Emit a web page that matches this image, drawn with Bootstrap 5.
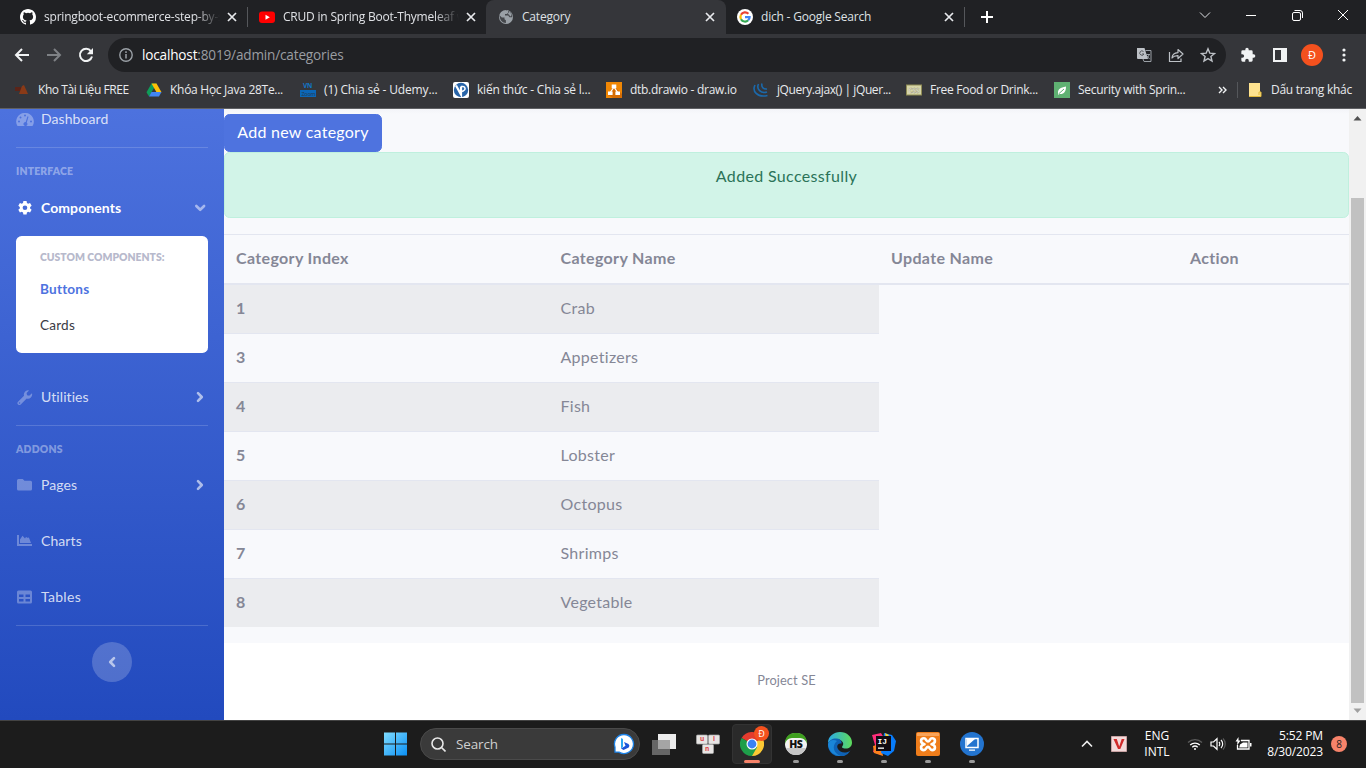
<!DOCTYPE html>
<html lang="en">
<head>
<meta charset="utf-8">
<meta name="viewport" content="width=device-width, initial-scale=1">
<title>Category</title>
<link href="https://cdn.jsdelivr.net/npm/bootstrap@5.3.0/dist/css/bootstrap.min.css" rel="stylesheet">
<style>
html,body{height:768px;overflow:hidden}
body{font-family:"Open Sans","Noto Sans",sans-serif;font-size:12px;line-height:16px;background:#202124;color:#e8eaed}
svg{display:block;flex:none}
.tabstrip{height:34px;padding-left:8px;background:#202124}
.tab{width:239px;height:34px;padding-left:12px;flex:none}
.tab .ttl{width:176px;margin-left:8px;overflow:hidden;white-space:nowrap;letter-spacing:-.2px;color:#dfe1e5}
.tab .fade-out{-webkit-mask-image:linear-gradient(90deg,#000 86%,transparent);mask-image:linear-gradient(90deg,#000 86%,transparent)}
.tab .cls{margin-left:4px}
.tab-on{background:#35363a;border-radius:8px 8px 0 0;width:240px;margin-right:-1px}
.tab-on .ttl{margin-left:8px}
.vsep{width:1px;height:20px;background:#55575b}
.winbtns{gap:34px;padding-right:17px;padding-bottom:5px}
.toolbar-row{height:38px;background:#35363a;padding-top:4px}
.nav-first{margin-left:14px}
.omni{height:34px;width:1118px;margin-left:14px;background:#202124;border-radius:17px;padding-left:11px;color:#9aa0a6}
.omni-icons{gap:16px;padding-right:10px}
.url{font-size:13.6px;letter-spacing:-.18px;margin-left:9px;color:#9a9da2}
.url b{font-weight:400;color:#fff}
.ext{margin-left:14px}
.ava{width:22px;height:22px;background:#f4511e;border-radius:50%;font-size:11px;color:#fff}
.marks{height:36px;background:#35363a;padding-left:14px;color:#e8eaed;letter-spacing:-.28px}
.bm{white-space:nowrap;flex:none}
.bm span{margin-left:8px}
.bm.tight span{letter-spacing:-.42px}
.viewport{height:612px;border-top:1px solid #5f6064;font-family:Lato,"Open Sans",sans-serif;font-variant-ligatures:none}
.side{width:224px;background:linear-gradient(180deg,#4d72de 0,#224abe 100%);font-size:14px;color:rgba(255,255,255,.8);overflow:hidden}
.side-row{height:56px;padding:0 16px;line-height:20px}
.side-row .lbl{margin-left:8px;letter-spacing:.08px}
.side-row.dash{height:38px;align-items:flex-start!important}
.side-row.on{color:#fff;font-weight:700}
.side hr{margin:0 16px;border:0;border-top:1px solid #fff;opacity:.16}
.side .hd{height:32px;padding:14px 16px 0;font-size:10.4px;font-weight:800;color:rgba(255,255,255,.4);line-height:18px;letter-spacing:.18px}
.side .hd-short{height:31px}
.chev{margin-right:3px}
.sub{margin:0 16px 16px;height:117px;background:#fff;border-radius:5.6px;padding:8px 24px;color:#3a3b45;font-size:13.6px}
.sub .cap{font-size:10.4px;font-weight:800;color:#b7b9cc;line-height:26px;white-space:nowrap}
.sub .it{height:36px;line-height:36px;letter-spacing:.2px}
.sub .act{color:#4e73df;font-weight:700;margin-top:1px}
.tog{width:40px;height:40px;border-radius:50%;background:rgba(255,255,255,.2);margin:16px auto 0}
.tog svg{transform:scaleX(-1)}
.content{width:1125px;background:#fff;font-size:16px;line-height:24px;color:#858796}
.wrap{height:534px;background:linear-gradient(#f3f4f8 0,#f8f9fc 5px);padding-top:5px}
.btn-add{display:block;height:38px;width:158px;border:1px solid #4e73df;background:#4e73df;color:#fff;border-radius:5.6px;font-size:16px;line-height:24px;padding:5px 0 7px;white-space:nowrap;letter-spacing:.26px}
.btn-add:hover{background:#2e59d9;color:#fff}
.alert-ok{height:66px;padding:11px 20px;margin:0 0 16px;border:1px solid #bff0de;border-radius:5.6px;background:#d2f4e8;color:#2b7358;text-align:center;letter-spacing:.34px}
.cat{width:1125px;table-layout:fixed;border-collapse:separate;border-spacing:0}
.cat col.c1{width:324.5px}
.cat col.c2{width:330.5px}
.cat col.c3{width:299px}
.cat th,.cat td{padding:11px 12px 13px;letter-spacing:.28px}
.cat thead th{border-top:1px solid #e3e6f0;border-bottom:2px solid #e3e6f0;font-weight:700;letter-spacing:.35px}
.cat tbody tr+tr>*{border-top:1px solid #e3e6f0}
.cat tbody th{font-weight:700}
.cat tbody tr:nth-child(odd)>*{background:#ebecef}
.foot{font-size:12.8px;line-height:16px;padding-top:29px;text-align:center;letter-spacing:.1px}
.sbar{width:17px;background:#f1f1f1;padding:6px 2px 6px}
.sbar .thumb{width:13px;height:505px;background:#c1c1c1;margin-top:77px}
.taskbar{height:48px;background:#1c1c1c;border-top:1px solid #434343;padding:0 0 1px 373px;color:#fff}
.slot{width:44px;height:46px;flex:none;position:relative}
.slot .dot{position:absolute;bottom:4px;left:19px;width:6px;height:3px;border-radius:2px;background:#9a9a9a}
.slot.cur::before{content:"";position:absolute;left:2px;top:3px;width:40px;height:40px;border-radius:4px;background:#2a2a2a;border:1px solid #333}
.slot.cur .dot{left:14px;width:16px;background:#f7836a}
.slot svg{position:relative}
.srch{width:220px;height:32px;margin:0 2px 0 3px;border-radius:16px;background:#3a3a3a;border:1px solid #4a4a4a;padding:0 4px 0 10px;font-size:13.5px;color:#d0d0d0}
.srch span{margin-left:10px;letter-spacing:-.15px}
.mini{position:absolute;left:24px;top:5px;width:15px;height:15px;border-radius:50%;background:#f4511e;font-size:9px;line-height:15px;text-align:center}
.tray{margin-left:86px}
.t-lang{width:40px;margin:0 10px}
.t-time{width:71px;letter-spacing:-.12px}
.nb{width:16px;height:16px;margin-left:8px;border-radius:50%;background:#f7836a;color:#222;font-size:10px;line-height:16px;text-align:center}
</style>
</head>
<body>
<svg width="0" height="0" class="position-absolute"><defs>
<symbol id="x" viewBox="0 0 16 16"><path d="M4 4l8 8M12 4l-8 8" stroke="#e8eaed" stroke-width="1.7"/></symbol>
<symbol id="right" viewBox="0 0 10 12"><path d="M3 2.200L6.800 6 3 9.800" fill="none" stroke="#fff" stroke-width="2.600" stroke-linecap="round" stroke-linejoin="round"/></symbol>
</defs></svg>

<header>
<div class="tabstrip d-flex align-items-center">
  <div class="tab d-flex align-items-center">
    <svg width="16" height="16" viewBox="0 0 16 16" fill="#fff"><path d="M8 0C3.580 0 0 3.580 0 8c0 3.540 2.290 6.530 5.470 7.590.4.070.55-.17.55-.38 0-.19-.01-.82-.01-1.490-2.010.37-2.530-.49-2.690-.94-.09-.23-.48-.94-.82-1.130-.28-.15-.68-.52-.01-.53.63-.01 1.080.58 1.230.82.72 1.210 1.870.87 2.330.66.070-.52.28-.87.51-1.070-1.780-.2-3.640-.89-3.640-3.950 0-.87.31-1.590.82-2.150-.08-.2-.36-1.020.08-2.120 0 0 .67-.21 2.200.82a7.600 7.600 0 0 1 4 0c1.530-1.040 2.200-.82 2.200-.82.44 1.100.16 1.920.08 2.120.51.56.82 1.270.82 2.150 0 3.070-1.870 3.750-3.650 3.950.29.25.54.73.54 1.480 0 1.070-.01 1.930-.01 2.200 0 .21.15.46.55.38A8.010 8.010 0 0 0 16 8c0-4.420-3.580-8-8-8z"/></svg>
    <span class="ttl fade-out">springboot-ecommerce-step-by-s</span><svg class="cls" width="16" height="16"><use href="#x"/></svg>
  </div>
  <div class="tab d-flex align-items-center position-relative">
    <div class="vsep position-absolute start-0"></div>
    <svg width="16" height="16" viewBox="0 0 16 16"><rect y="2.500" width="16" height="11.500" rx="3" fill="#f00"/><path d="M6.500 5.700v5L10.800 8.200z" fill="#fff"/></svg>
    <span class="ttl fade-out">CRUD in Spring Boot-Thymeleaf w</span><svg class="cls" width="16" height="16"><use href="#x"/></svg>
  </div>
  <div class="tab tab-on d-flex align-items-center">
    <svg width="16" height="16" viewBox="0 0 16 16"><circle cx="8" cy="8" r="7" fill="#9aa0a6"/><path d="M1.500 6.200L3.800 8.500h2.700v1.800l1.400 1v2.600c-3.600 0-6-2.700-6.400-7.700zM7.300 1.300l2.900.5v2L8.700 5H7v1.600h3.200l1.300 1.700h2.700c.3-3.500-2-7-6.900-7z" fill="#44464a"/><path d="M11 2.300l2.500 3-.4 2.200-1.200-.4L11 5.400 9.500 5l1.200-1.200z" fill="#9aa0a6"/></svg>
    <span class="ttl">Category</span><svg class="cls" width="16" height="16"><use href="#x"/></svg>
  </div>
  <div class="tab d-flex align-items-center">
    <svg width="16" height="16" viewBox="0 0 16 16" fill="none" stroke-width="2.200"><circle cx="8" cy="8" r="8" fill="#fff"/><path d="M4 5.800a4.600 4.600 0 0 1 7.400-1" stroke="#ea4335"/><path d="M4 10.200a4.600 4.600 0 0 1 0-4.400" stroke="#fbbc05"/><path d="M11.200 11.300a4.600 4.600 0 0 1-7.200-1.100" stroke="#34a853"/><path d="M8 8.200h4.600a4.600 4.600 0 0 1-1.400 3.100" stroke="#4285f4"/></svg>
    <span class="ttl">dich - Google Search</span><svg class="cls" width="16" height="16"><use href="#x"/></svg>
  </div>
  <div class="vsep"></div>
  <svg class="ms-3" width="12" height="12" viewBox="0 0 12 12"><path d="M6 0v12M0 6h12" stroke="#fff" stroke-width="2"/></svg>
  <div class="winbtns d-flex align-items-center ms-auto">
    <svg width="12" height="12" viewBox="0 0 12 12" fill="none" stroke="#dfe1e5"><path d="M1 3.500l5 5 5-5"/></svg>
    <svg width="12" height="12" viewBox="0 0 12 12"><path d="M1 6.500h10" stroke="#fff"/></svg>
    <svg width="12" height="12" viewBox="0 0 12 12" fill="none" stroke="#fff"><rect x="1.500" y="3.500" width="8" height="8" rx="1.500"/><path d="M3.500 1.500H9a2.500 2.500 0 0 1 2.500 2.500v5"/></svg>
    <svg width="12" height="12" viewBox="0 0 12 12" stroke="#fff"><path d="M1 1l10 10M11 1L1 11"/></svg>
  </div>
</div>

<div class="toolbar-row d-flex align-items-center">
  <svg class="nav-first" width="16" height="16" viewBox="0 0 16 16" fill="none" stroke="#f1f3f4" stroke-width="2"><path d="M15 8H2.500M8 2L2 8l6 6"/></svg>
  <svg class="ms-3" width="16" height="16" viewBox="0 0 16 16" fill="none" stroke="#7e8185" stroke-width="2"><path d="M1 8h12.500M8 2l6 6-6 6"/></svg>
  <svg class="ms-3" width="16" height="16" viewBox="0 0 16 16"><path d="M13 4.300A6.100 6.100 0 1 0 14 9.500" fill="none" stroke="#f1f3f4" stroke-width="2"/><path d="M15 1v6.200H8.800z" fill="#f1f3f4"/></svg>
  <div class="omni d-flex align-items-center">
    <svg width="14" height="14" viewBox="0 0 14 14"><circle cx="7" cy="7" r="6.200" fill="none" stroke="#9aa0a6" stroke-width="1.400"/><path d="M7 6v4.500M7 3.300V5" stroke="#9aa0a6" stroke-width="1.500"/></svg>
    <span class="url"><b>localhost</b>:8019/admin/categories</span>
    <div class="omni-icons d-flex ms-auto align-items-center">
      <svg width="16" height="16" viewBox="0 0 16 16"><path d="M1 1h7.500l3.500 11H2a1 1 0 0 1-1-1z" fill="#bdc1c6"/><path d="M9.500 3.500H15v11H8l-1-2.500" fill="none" stroke="#9aa0a6"/><path d="M7.500 4.500A2.200 2.200 0 1 0 8 7H6" fill="none" stroke="#55585c"/><path d="M9.500 7.500h4.500M13 8c-.5 1.500-1.500 2.500-2 3M11 9l2.500 3" stroke="#9aa0a6" fill="none"/></svg>
      <svg width="16" height="16" viewBox="0 0 16 16" fill="none" stroke="#bdc1c6" stroke-width="1.200"><path d="M1.500 5v9.500h11.500v-3"/><path d="M4 11c.2-3.500 2.200-5.200 6-5.400V2.500L15 7l-5 4.500V8.600C7.500 8.500 5.500 9 4 11z" stroke-linejoin="round"/></svg>
      <svg width="16" height="16" viewBox="0 0 16 16" fill="none" stroke="#bdc1c6" stroke-width="1.400"><path d="M8 1.800l1.800 4.300 4.700.4-3.600 3 1.100 4.600L8 11.600l-4 2.500 1.100-4.600-3.600-3 4.700-.4z"/></svg>
    </div>
  </div>
  <svg class="ext" width="16" height="16" viewBox="0 0 24 24" fill="#f1f3f4"><path d="M20.500 11H19V7a2 2 0 0 0-2-2h-4V3.500a2.500 2.500 0 0 0-5 0V5H4a2 2 0 0 0-2 2v3.800h1.500a2.700 2.700 0 0 1 0 5.400H2V20a2 2 0 0 0 2 2h3.800v-1.500a2.700 2.700 0 0 1 5.400 0V22H17a2 2 0 0 0 2-2v-4h1.500a2.500 2.500 0 0 0 0-5z"/></svg>
  <svg style="margin-left:17px" width="14" height="14" viewBox="0 0 14 14"><path d="M0 0h14v14H0zM2 2v10h6V2z" fill="#f1f3f4" fill-rule="evenodd"/></svg>
  <div class="ava ext d-flex align-items-center justify-content-center">Đ</div>
  <svg style="margin-left:19px" width="4" height="14" viewBox="0 0 4 14" fill="#f1f3f4"><circle cx="2" cy="2" r="1.600"/><circle cx="2" cy="7" r="1.600"/><circle cx="2" cy="12" r="1.600"/></svg>
</div>

<div class="marks d-flex align-items-center">
  <div class="bm tight d-flex align-items-center" style="width:132px"><svg width="16" height="16" viewBox="0 0 16 16"><path d="M1 5h6v4H1z" fill="#5b2418"/><path d="M8 4l2-1 4 9H5z" fill="#8a3a17"/></svg><span>Kho Tài Liệu FREE</span></div>
  <div class="bm d-flex align-items-center" style="width:154px"><svg width="16" height="16" viewBox="0 0 16 16"><path d="M5.500 1.500h5L8 6 3 14.500.5 10.200z" fill="#0f9d58"/><path d="M5.500 1.500h5l5 8.700h-5z" fill="#ffc107"/><path d="M5.500 10h10L13 14.500H3z" fill="#4285f4"/></svg><span>Khóa Học Java 28Te...</span></div>
  <div class="bm d-flex align-items-center" style="width:153px"><svg width="16" height="16" viewBox="0 0 16 16"><rect y="8" width="16" height="7" fill="#0b67b8"/><text x="3" y="6" font-size="6.500" font-weight="700" fill="#1176c8">VN</text><text x="1.500" y="13.600" font-size="5.500" fill="#25384c">Zoom</text></svg><span style="letter-spacing:-.15px">(1) Chia sẻ - Udemy...</span></div>
  <div class="bm d-flex align-items-center" style="width:153px"><svg width="16" height="16" viewBox="0 0 16 16"><rect width="16" height="16" rx="2" fill="#fff"/><circle cx="8" cy="8" r="7.200" fill="#2864a8"/><path d="M3 3.500l5 9V4.500" fill="none" stroke="#fff" stroke-width="2.200"/><path d="M8 4.500h2a2.200 2.200 0 0 1 .5 4.300L9 9.500" fill="none" stroke="#fff" stroke-width="1.600"/></svg><span style="letter-spacing:-.18px">kiến thức - Chia sẻ l...</span></div>
  <div class="bm d-flex align-items-center" style="width:147px"><svg width="16" height="16" viewBox="0 0 16 16"><path fill="#f08705" d="M0 0h16v16H0z"/><path d="M8 4l8 8v4H7l-5-3z" fill="#d56c04"/><path d="M8 5l-4 6M8 5l4 6" stroke="#fff" stroke-width="1.300"/><path d="M5.700 2.500h4.600v3.800H5.700zM2 9.500h4.600v3.500H2zM9.400 9.500H14v3.500H9.400z" fill="#fff"/></svg><span>dtb.drawio - draw.io</span></div>
  <div class="bm tight d-flex align-items-center" style="width:153px"><svg width="16" height="16" viewBox="0 0 16 16" fill="none" stroke="#1b69ab" stroke-width="1.600"><path d="M2 3c-3 6 2 13 12.500 10.500M5.500 2C3 7 8 12 14 10M9 1.500C8 5 10.500 7.500 14 7"/></svg><span>jQuery.ajax() | jQuer...</span></div>
  <div class="bm d-flex align-items-center" style="width:148px"><svg width="16" height="16" viewBox="0 0 16 16"><rect x=".5" y="3" width="15" height="10" fill="#d6d5a8" stroke="#8f8c55"/><text x="2.600" y="10.500" font-size="6.500" font-weight="700" fill="#fff" stroke="#77744a" stroke-width=".3">CSS</text></svg><span>Free Food or Drink...</span></div>
  <div class="bm d-flex align-items-center" style="width:164px"><svg width="16" height="16" viewBox="0 0 16 16"><path fill="#5fb172" d="M0 0h16v16H0z"/><path d="M4 11c0-4 2-5.500 8-6.500 0 5-2 8-6.500 7.500L4 13z" fill="#fff"/><path d="M4.500 12L10 7" stroke="#5fb172"/></svg><span>Security with Sprin...</span></div>
  <svg width="9" height="8" viewBox="0 0 9 8" fill="none" stroke="#f1f3f4" stroke-width="1.400"><path d="M1 1l3 3-3 3M5 1l3 3-3 3"/></svg>
  <div class="vsep" style="height:16px;margin-left:10px"></div>
  <svg style="margin-left:11px" width="14" height="14" viewBox="0 0 14 14"><path d="M0 0h11v9h1v4H0z" fill="#ffe38f"/><path d="M0 13.500h12V9h-2v3" fill="none" stroke="#e3ba3b"/></svg>
  <span class="text-nowrap ms-2">Dấu trang khác</span>
</div>
</header>

<div class="viewport d-flex">
<nav class="side flex-shrink-0">
  <div class="side-row dash d-flex align-items-center"><svg class="mt-1" width="18" height="14" viewBox="0 0 18 14" fill="#fff" opacity=".32"><path fill-rule="evenodd" d="M9 0a8.500 8.500 0 0 0-7.500 13h15A8.500 8.500 0 0 0 9 0zM9 1.500a1 1 0 1 1 0 2 1 1 0 0 1 0-2zM4.500 3.500a1 1 0 1 1 0 2 1 1 0 0 1 0-2zM3 7.500a1 1 0 1 1 0 2 1 1 0 0 1 0-2zM15 7.500a1 1 0 1 1 0 2 1 1 0 0 1 0-2zM11.500 3.300l1 .4-1.700 5.800A2 2 0 1 1 9.700 9z"/></svg><span class="lbl" style="margin-left:7px">Dashboard</span></div>
  <hr>
  <div class="hd">INTERFACE</div>
  <div class="side-row on d-flex align-items-center"><svg width="17" height="15" viewBox="-1 0 17 16" fill="#fff"><path fill-rule="evenodd" d="M6.300 0h3.400l.4 2 1.300.8 2-.7 1.700 3-1.600 1.300v1.500l1.600 1.400-1.700 2.900-2-.7-1.300.8-.4 2H6.300l-.4-2-1.300-.8-2 .7-1.700-2.900 1.600-1.400V6.400L.9 5.100l1.700-3 2 .7L5.900 2zM8 4.700a2.500 2.500 0 1 0 0 5 2.500 2.500 0 0 0 0-5z"/></svg><span class="lbl">Components</span><svg class="ms-auto" width="16" height="12" viewBox="0 0 16 12"><path d="M4.300 4l3.900 3.800L12.100 4" fill="none" stroke="#a5b7ee" stroke-width="2.600" stroke-linecap="round" stroke-linejoin="round"/></svg></div>
  <div class="sub"><div class="cap">CUSTOM COMPONENTS:</div><div class="it act">Buttons</div><div class="it">Cards</div></div>
  <div class="side-row d-flex align-items-center"><svg width="17" height="15" viewBox="-1 0 17 16" fill="#fff" opacity=".3"><path fill-rule="evenodd" d="M15.500 3.500l-3 2.500-2.300-.5L9.700 3.300 12.300.5A4.500 4.500 0 0 0 7 6.200L.6 12.500a2 2 0 0 0 2.900 2.900L9.800 9a4.500 4.500 0 0 0 5.700-5.500zM2.200 13a.8.8 0 1 1 0 1.600.8.8 0 0 1 0-1.600z"/></svg><span class="lbl">Utilities</span><svg class="chev ms-auto" width="10" height="12" opacity=".6"><use href="#right"/></svg></div>
  <hr>
  <div class="hd hd-short">ADDONS</div>
  <div class="side-row d-flex align-items-center"><svg width="17" height="12" viewBox="-1 0 17 12" fill="#fff" opacity=".3"><path d="M1.500 0h4.200l1.800 1.800h6A1.500 1.500 0 0 1 15 3.300v6.700a1.500 1.500 0 0 1-1.500 1.500h-12A1.500 1.500 0 0 1 0 10V1.500A1.500 1.500 0 0 1 1.500 0z"/></svg><span class="lbl">Pages</span><svg class="chev ms-auto" width="10" height="12" opacity=".6"><use href="#right"/></svg></div>
  <div class="side-row d-flex align-items-center"><svg width="17" height="12" viewBox="-1 0 17 12" fill="#fff" opacity=".3"><path d="M0 0h2v9h13v2H0zM3 8V4.500L5.500.8 8 3.500 9 2l2 1 .8-.8L14 8z"/></svg><span class="lbl">Charts</span></div>
  <div class="side-row d-flex align-items-center"><svg width="17" height="14" viewBox="-1 0 17 14" fill="#fff" opacity=".3"><path fill-rule="evenodd" d="M1.500.5h12A1.500 1.500 0 0 1 15 2v10a1.500 1.500 0 0 1-1.500 1.500h-12A1.500 1.500 0 0 1 0 12V2A1.500 1.500 0 0 1 1.500.5zM2 4.500V7h4.500V4.500zM8.500 4.500V7H13V4.500zM2 9v2.500h4.500V9zM8.500 9v2.500H13V9z"/></svg><span class="lbl" style="letter-spacing:.3px">Tables</span></div>
  <hr>
  <div class="tog d-flex align-items-center justify-content-center"><svg width="10" height="12" opacity=".6"><use href="#right"/></svg></div>
</nav>
<main class="content flex-shrink-0">
  <div class="wrap">
    <a href="#" class="btn btn-add">Add new category</a>
    <div class="alert alert-ok">Added Successfully</div>
    <table class="cat">
      <colgroup><col class="c1"><col class="c2"><col class="c3"><col></colgroup>
      <thead><tr><th>Category Index</th><th>Category Name</th><th>Update Name</th><th>Action</th></tr></thead>
      <tbody>
        <tr><th>1</th><td>Crab</td></tr>
        <tr><th>3</th><td>Appetizers</td></tr>
        <tr><th>4</th><td>Fish</td></tr>
        <tr><th>5</th><td>Lobster</td></tr>
        <tr><th>6</th><td>Octopus</td></tr>
        <tr><th>7</th><td>Shrimps</td></tr>
        <tr><th>8</th><td>Vegetable</td></tr>
      </tbody>
    </table>
  </div>
  <footer class="foot">Project SE</footer>
</main>
<div class="sbar d-flex flex-column align-items-center flex-shrink-0">
  <svg width="9" height="6" viewBox="0 0 9 6"><path d="M.5 5.500h8l-4-4.500z" fill="#505050"/></svg>
  <div class="thumb"></div>
  <svg class="mt-auto" width="9" height="6" viewBox="0 0 9 6"><path d="M.5.5h8l-4 4.500z" fill="#a0a0a0"/></svg>
</div>
</div>

<footer class="taskbar d-flex align-items-center">
  <div class="slot d-flex align-items-center justify-content-center"><svg width="24" height="24" viewBox="0 0 24 24"><defs><linearGradient id="w" x2="1" y2="1"><stop stop-color="#7fdcff"/><stop offset="1" stop-color="#0a8ff5"/></linearGradient></defs><path d="M1 .5h11v11H1zM13 .5h11v11H13zM1 12.500h11v11H1zM13 12.500h11v11H13z" fill="url(#w)"/></svg></div>
  <div class="srch d-flex align-items-center"><svg width="15" height="15" viewBox="0 0 15 15" fill="none" stroke="#e8e8e8" stroke-width="1.600"><circle cx="6.500" cy="6.500" r="5.500"/><path d="M10.500 10.500l4 4"/></svg><span>Search</span>
    <svg class="ms-auto" width="22" height="22" viewBox="0 0 22 22"><path d="M11 1.500a9.500 9.500 0 1 1-5 17.600H2v-5A9.500 9.500 0 0 1 11 1.500z" fill="#fff" stroke="#1d83e8" stroke-width="1.300"/><path d="M8 5l2 .9v7.800l-2 1.800z" fill="#2ba7f3"/><path d="M8 15.500l3-1.800 1.500-1-1.500-3.700 4.500 2a2.500 2.500 0 0 1 .2 3.500L10.500 17z" fill="#1b55d8"/></svg></div>
  <div class="slot d-flex align-items-center justify-content-center"><svg width="24" height="22" viewBox="0 0 24 22"><path d="M6 1h18v15H6z" fill="#ececec"/><path d="M0 7h18v15H0z" fill="#666"/><path d="M6 7h12v9H6z" fill="#a5a5a5"/></svg></div>
  <div class="slot d-flex align-items-center justify-content-center"><svg width="24" height="22" viewBox="0 0 24 22"><g fill="#e7e5e4" stroke="#aaa" stroke-width=".7"><rect x=".5" y="2" width="11" height="9" rx="1"/><rect x="12.500" y="2" width="11" height="9" rx="1"/><rect x="6.500" y="11.500" width="11" height="9" rx="1"/></g><g font-size="6.500" font-weight="700" fill="#d44"><text x="4" y="8.300">u</text><text x="17" y="8.300">i</text><text x="9" y="17.500">n</text></g></svg></div>
  <div class="slot cur d-flex align-items-center justify-content-center"><svg width="24" height="24" viewBox="0 0 24 24"><path d="M12 12L1.600 6A12 12 0 0 1 22.400 6z" fill="#e33b2e"/><path d="M12 12L22.400 6A12 12 0 0 1 12 24z" fill="#fcc934"/><path d="M1.600 6A12 12 0 0 0 12 24l5.200-9-5.200-3z" fill="#1e9e4a"/><path d="M12 6.500h10.700L22.400 6H12z" fill="#e33b2e"/><circle cx="12" cy="12" r="5.500" fill="#fff"/><circle cx="12" cy="12" r="4.400" fill="#3b82f3"/></svg><span class="mini">Đ</span><i class="dot"></i></div>
  <div class="slot d-flex align-items-center justify-content-center"><svg width="24" height="24" viewBox="0 0 24 24"><circle cx="12" cy="12" r="11" fill="#f2f2f2"/><path d="M1 12C1 2 8 1 12 1s11 1 11 11c-2-7-7-6-11-6S3 5 1 12z" fill="#3f9f1f"/><path d="M2 16h20c-3 6-6 7-10 7S5 22 2 16z" fill="#c6c6c6"/><text x="11.700" y="15.800" text-anchor="middle" font-size="10.500" font-weight="800" fill="#111" letter-spacing="-.6">HS</text></svg><i class="dot"></i></div>
  <div class="slot d-flex align-items-center justify-content-center"><svg width="24" height="24" viewBox="0 0 24 24"><defs><linearGradient id="e" x2="1"><stop stop-color="#2aa9e8"/><stop offset="1" stop-color="#5edb5a"/></linearGradient></defs><path d="M0 11C0 4 6 0 12 0c7 0 12 5 12 10.500 0 4-3 6-6 6-4 0-4.500-1.500-3.500-2.500C17 11 13 7 9 7c-4 0-7 2-9 4z" fill="url(#e)"/><path d="M0 12c1-4 5-6 9-5.500 4 .5 5 3.500 4.500 5-5-1-6 5-1 8 3 1.800 7 1.300 10-1A12 12 0 0 1 0 12z" fill="#0f62b5"/><path d="M9 9c-6 5-3 13 4 15-7 0-13-5-13-12 1-4 6-5 9-3z" fill="#1a86d8"/></svg><i class="dot"></i></div>
  <div class="slot d-flex align-items-center justify-content-center"><svg width="24" height="24" viewBox="0 0 24 24"><path d="M0 3l9-2 5 8-5 14-8-3 2-7z" fill="#ff2d7a"/><path d="M1 14l8-2 2 12-9-3z" fill="#fc801d"/><path d="M12 1l8 2 4 6-2 10-6 5-7-3z" fill="#087cfa"/><path d="M13 1l4 2-3 4z" fill="#fcd02d"/><path d="M4 4h15v15H4z" fill="#120b12"/><text x="5.500" y="11.500" font-family="Liberation Mono,monospace" font-size="8" font-weight="700" fill="#fff">IJ</text><path d="M6 15.500h6v1.300H6z" fill="#fff"/></svg><i class="dot"></i></div>
  <div class="slot d-flex align-items-center justify-content-center"><svg width="24" height="24" viewBox="0 0 24 24"><rect width="24" height="24" rx="2" fill="#ef7d1b"/><path d="M1 1h22v3H1z" fill="#f9a45a"/><path d="M8.500 12.200C3.500 11 4.500 6.300 8 6.300c2.300 0 2 3.200 4 3.200s1.700-3.200 4-3.200c3.500 0 4.500 4.700-.5 5.900 5 1.200 4 5.900.5 5.900-2.300 0-2-3.200-4-3.200s-1.700 3.200-4 3.200c-3.500 0-4.500-4.700.5-5.900z" fill="none" stroke="#fff" stroke-width="2.600" stroke-linejoin="round"/></svg><i class="dot"></i></div>
  <div class="slot d-flex align-items-center justify-content-center"><svg width="24" height="24" viewBox="0 0 24 24"><circle cx="12" cy="12" r="12" fill="#2374cf"/><path d="M6 6.500h12v9H6z" fill="none" stroke="#fff" stroke-width="1.500"/><path d="M7 14L15 7H7zM9 17.500h6v1.300H9z" fill="#fff"/></svg><i class="dot"></i></div>
  <div class="tray d-flex align-items-center">
    <svg width="14" height="10" viewBox="0 0 14 10" fill="none" stroke="#eee" stroke-width="1.600"><path d="M2 7.500l5-5 5 5"/></svg>
    <svg style="margin-left:17px" width="16" height="16" viewBox="0 0 16 16"><path d="M.5.500h15v15H.5z" fill="#f3dada" stroke="#c9a3a3"/><path d="M2.500 3h3.300l2.400 7.500L10.700 3h2.800L9.300 13H7z" fill="#d12a2a"/></svg>
    <div class="text-center t-lang">ENG<br>INTL</div>
    <svg width="16" height="14" viewBox="0 0 16 14" fill="none" stroke-width="1.300"><path d="M1 5.500a10 10 0 0 1 14 0" stroke="#5b5b5b"/><path d="M3.200 8a7 7 0 0 1 9.600 0M5.300 10.200a4 4 0 0 1 5.400 0" stroke="#fff"/><circle cx="8" cy="12" r="1" fill="#fff"/></svg>
    <svg style="margin-left:7px" width="16" height="14" viewBox="0 0 16 14" fill="none" stroke="#fff" stroke-width="1.200"><path d="M1 5v4h2.500L7 12.300V1.700L3.500 5z"/><path d="M9 5c1 1 1 3 0 4M11 3c2.200 2 2.200 6 0 8"/><path d="M13 1.500c3 3 3 8 0 11" stroke="#5b5b5b"/></svg>
    <svg style="margin-left:9px" width="17" height="14" viewBox="0 0 17 14"><path d="M6 3.500h8v8.500H2.500V8" fill="none" stroke="#fff" stroke-width="1.300"/><path d="M5 7.500l3-2h4.500v5H4.200zM15 6h1.500v3.500H15zM3.500 0L.5 4.500h2L2 8.500 5.500 3.500h-2z" fill="#fff"/></svg>
    <div class="text-end t-time">5:52 PM<br>8/30/2023</div>
    <div class="nb">8</div>
  </div>
</footer>
<script src="https://cdn.jsdelivr.net/npm/bootstrap@5.3.0/dist/js/bootstrap.bundle.min.js"></script>
</body>
</html>
